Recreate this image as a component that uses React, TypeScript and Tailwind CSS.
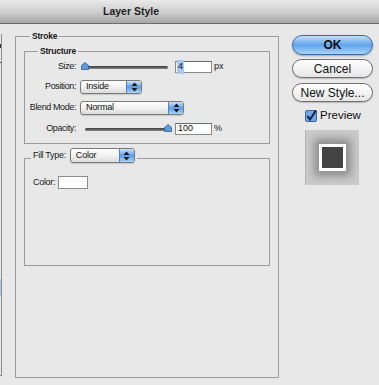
import React from 'react';

const font = { fontFamily: '"Liberation Sans", Arial, sans-serif' };

const Arrows = () => (
  <svg width="7" height="10" viewBox="0 0 7 10">
    <path d="M3.5 0.5 L6.5 4 L0.5 4 Z" fill="#1a1a1a" />
    <path d="M3.5 9.5 L6.5 6 L0.5 6 Z" fill="#1a1a1a" />
  </svg>
);

const Select = ({ label, width, height = 14 }: { label: string; width: number; height?: number }) => (
  <div
    className="flex items-stretch rounded-[3px] border border-[#7a7a7a] bg-gradient-to-b from-white via-[#f1f1f1] to-[#dcdcdc] shadow-[0_1px_1px_rgba(0,0,0,0.15)] overflow-hidden"
    style={{ width, height }}
  >
    <span className="flex-1 flex items-center pl-[5px] text-[9px] tracking-[-0.2px] text-[#111]">{label}</span>
    <span className="w-[15px] flex items-center justify-center border-l border-[#5b7fb0] bg-gradient-to-b from-[#cfe3f9] via-[#5c9ee6] to-[#a9d1f7]">
      <Arrows />
    </span>
  </div>
);

const Slider = ({ pos }: { pos: 'start' | 'end' }) => (
  <div className={`w-[92px] h-[10px] flex items-center relative ${pos === 'start' ? 'pl-[3px] pr-[4px]' : 'pl-[5px] pr-[2px]'}`}>
    <div className="flex-1 h-[3px] rounded-full bg-gradient-to-b from-[#3b3b3b] to-[#8a8a8a]" />
    <svg
      width="8"
      height="8"
      viewBox="0 0 8 8"
      className={`absolute top-[0px] ${pos === 'start' ? 'left-[1px]' : 'right-[0px]'}`}
    >
      <path d="M4 0.5 L7.5 3.5 L7.5 7.5 L0.5 7.5 L0.5 3.5 Z" fill="#5d9ae0" stroke="#2e5f9e" strokeWidth="0.8" />
    </svg>
  </div>
);

const Field = ({ value, selected }: { value: string; selected?: boolean }) => (
  <div className="ml-[3px] w-[37px] h-[12px] bg-white border border-[#8a8a8a] border-t-[#6a6a6a] flex items-center pl-[1px] text-[9px] text-[#111]">
    <span className={selected ? 'bg-[#a7c8ef] px-[1px]' : 'pl-[1px]'}>{value}</span>
  </div>
);

const Label = ({ children }: { children: React.ReactNode }) => (
  <span className="w-[51px] text-right text-[9px] tracking-[-0.4px] text-[#1a1a1a]">{children}</span>
);

export default function App() {
  return (
    <div className="w-[379px] h-[385px] bg-[#e8e8e8] overflow-hidden text-[#1a1a1a]" style={font}>
      <div className="h-[24px] border-b border-[#6e6e6e] bg-gradient-to-b from-[#e9e9e9] via-[#cfcfcf] to-[#a8a8a8] flex items-center pl-[103px]">
        <span className="text-[10.5px] font-bold text-[#1e1e1e]">Layer Style</span>
      </div>

      <div className="flex">
        {/* cut-off list on the left */}
        <div className="w-[2px] h-[342px] mt-[10px] border-r border-b border-[#8c8c8c] flex flex-col">
          <div className="mt-[10px] w-[1px] h-[4px] bg-[#333]" />
          <div className="mt-[14px] w-[1px] h-[1px] bg-[#444]" />
          <div className="mt-[216px] w-[1px] h-[17px] bg-[#a9c6ea]" />
        </div>

        {/* Stroke */}
        <fieldset className="ml-[13px] mt-[6px] w-[264px] h-[348px] border border-[#9c9c9c] pl-[8px]">
          <legend className="ml-[6px] px-[2px] text-[8.5px] font-bold leading-[12px] tracking-[-0.2px]">Stroke</legend>

          <fieldset className="mt-[3px] w-[246px] h-[99px] border border-[#9c9c9c]">
            <legend className="ml-[13px] px-[2px] text-[8.5px] font-bold leading-[12px] tracking-[-0.2px]">Structure</legend>
            <div className="flex flex-col">
              <div className="h-[20px] flex items-center">
                <Label>Size:</Label>
                <div className="ml-[4px]"><Slider pos="start" /></div>
                <Field value="4" selected />
                <span className="ml-[2px] text-[9px]">px</span>
              </div>
              <div className="h-[20px] flex items-center">
                <Label>Position:</Label>
                <div className="ml-[4px]"><Select label="Inside" width={62} /></div>
              </div>
              <div className="h-[22px] flex items-center">
                <Label>Blend Mode:</Label>
                <div className="ml-[4px]"><Select label="Normal" width={104} /></div>
              </div>
              <div className="h-[20px] flex items-center">
                <Label>Opacity:</Label>
                <div className="ml-[4px]"><Slider pos="end" /></div>
                <Field value="100" />
                <span className="ml-[2px] text-[9px]">%</span>
              </div>
            </div>
          </fieldset>

          <fieldset className="mt-[4px] w-[246px] h-[118px] border border-[#9c9c9c]">
            <legend className="ml-[6px] px-[2px] h-[20px] flex items-start">
              <span className="h-[15px] flex items-center text-[9px] tracking-[-0.3px]">Fill Type:</span>
              <div className="ml-[4px]"><Select label="Color" width={65} height={15} /></div>
            </legend>
            <div className="mt-[8px] pl-[8px] flex items-center">
              <span className="text-[9px] tracking-[-0.3px]">Color:</span>
              <div className="ml-[3px] w-[30px] h-[13px] bg-white border border-[#8a8a8a]" />
            </div>
          </fieldset>
        </fieldset>

        {/* Buttons */}
        <div className="ml-[13px] mt-[11px] w-[81px] flex flex-col">
          <button className="h-[20px] rounded-full border border-[#3d6aa3] bg-gradient-to-b from-[#c4e0fb] via-[#5fa4ec] to-[#a6d4fb] text-[12px] font-bold text-[#111] shadow-[0_1px_2px_rgba(0,0,0,0.3)]">
            OK
          </button>
          <button className="mt-[4px] h-[19px] rounded-full border border-[#707070] bg-gradient-to-b from-white to-[#e6e6e6] text-[12px] text-[#111] shadow-[0_1px_1px_rgba(0,0,0,0.2)]">
            Cancel
          </button>
          <button className="mt-[5px] h-[19px] rounded-full border border-[#707070] bg-gradient-to-b from-white to-[#e6e6e6] text-[12px] text-[#111] shadow-[0_1px_1px_rgba(0,0,0,0.2)]">
            New Style...
          </button>
          <div className="mt-[5px] ml-[13px] flex items-center">
            <svg width="12" height="12" viewBox="0 0 12 12">
              <rect x="0.5" y="0.5" width="11" height="11" rx="1.5" fill="#6fa8e8" stroke="#3a67a0" />
              <path d="M2.5 6 L5 9.5 L11 0.5" fill="none" stroke="#0c1a3a" strokeWidth="2" />
            </svg>
            <span className="ml-[3px] text-[11.5px] text-[#111]">Preview</span>
          </div>
          <div className="mt-[6px] ml-[13px] w-[54px] h-[55px] bg-[#cacaca] border-l border-[#b4b4b4] flex items-center justify-center">
            <div className="w-[27px] h-[27px] border-[3px] border-white bg-[#444] shadow-[0_0_8px_5px_rgba(0,0,0,0.3)]" />
          </div>
        </div>
      </div>
    </div>
  );
}
